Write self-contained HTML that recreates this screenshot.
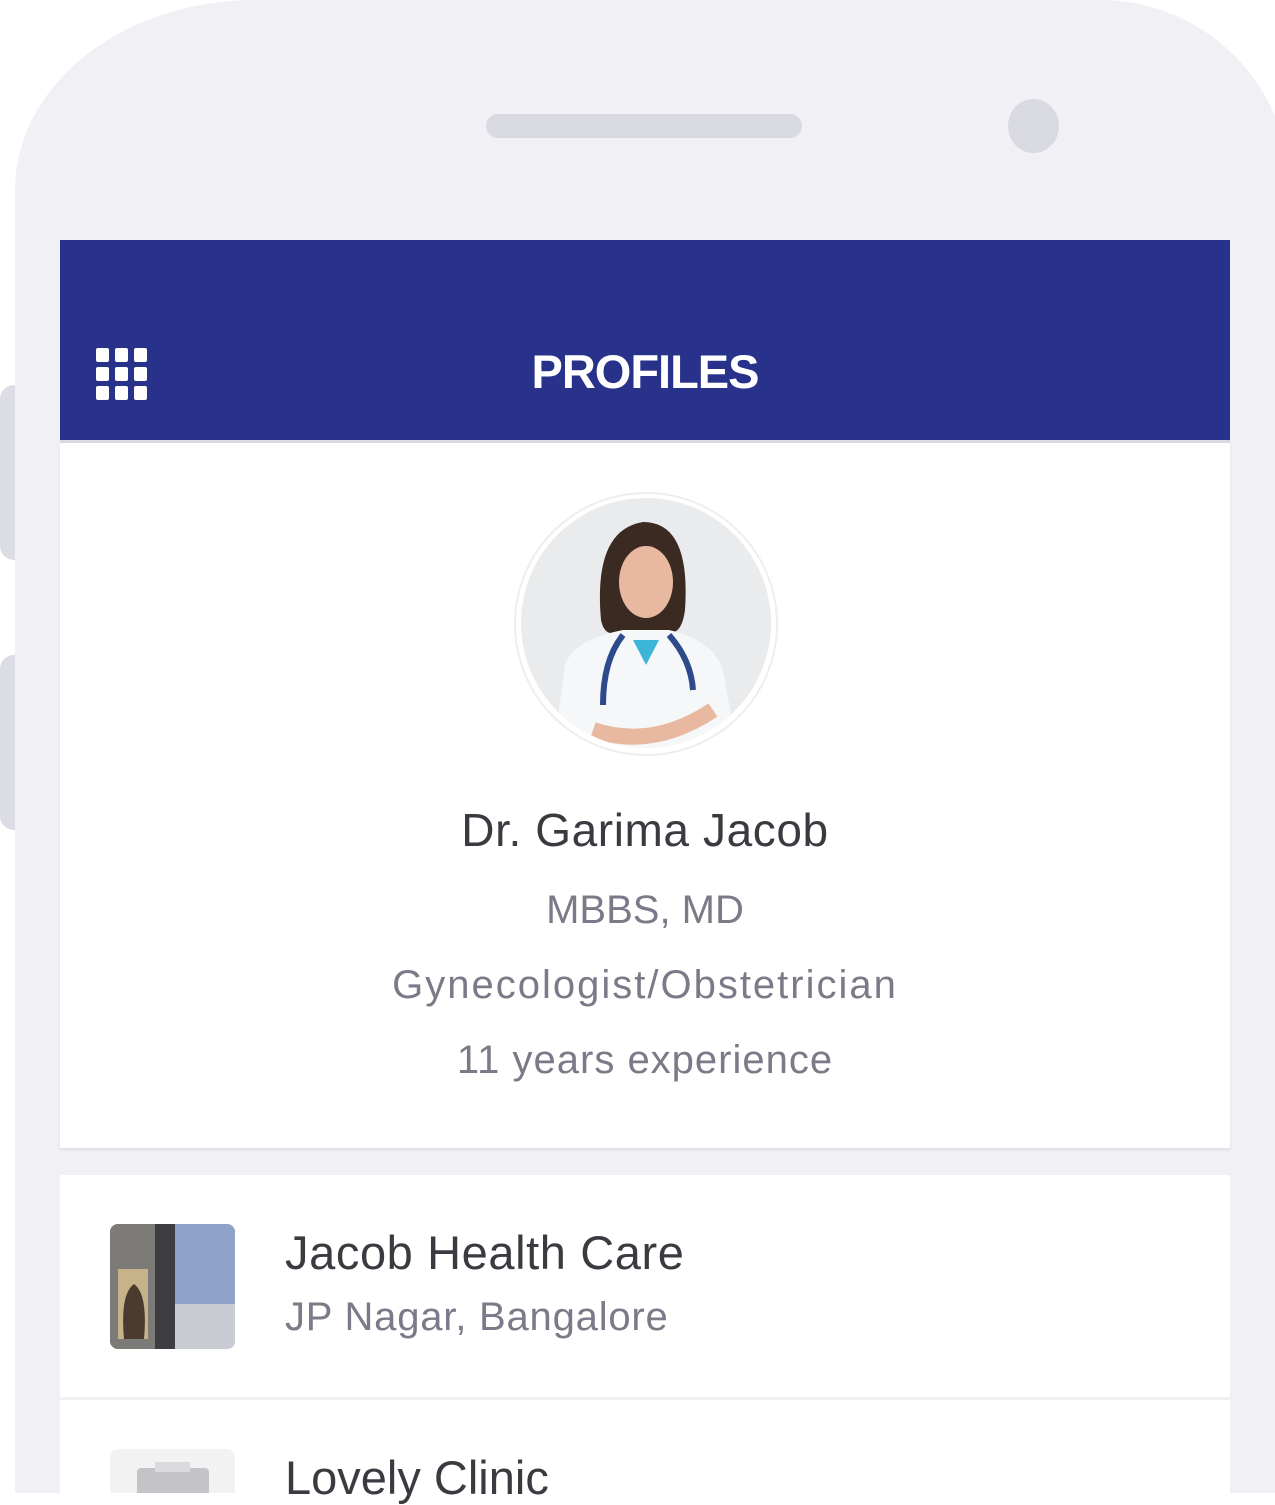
<!DOCTYPE html>
<html><head><meta charset="utf-8"><style>
*{margin:0;padding:0;box-sizing:border-box}
body{width:1275px;height:1505px;background:#fff;position:relative;overflow:hidden;font-family:"Liberation Sans",sans-serif}
.phone{position:absolute;left:15px;top:0;width:1275px;height:1493px;background:#f0f0f5;border-radius:240px 190px 0 0/190px 190px 0 0}
.btn{position:absolute;left:0;width:20px;background:#dcdce4;border-radius:14px 0 0 14px}
.spk{position:absolute;left:486px;top:114px;width:316px;height:24px;border-radius:12px;background:#d9d9e2}
.cam{position:absolute;left:1008px;top:99px;width:51px;height:54px;border-radius:50%;background:#d9d9e2}
.hdr{position:absolute;left:60px;top:240px;width:1170px;height:203px;background:#29328b;border-bottom:3px solid #d9d9e2}
.card{position:absolute;left:60px;top:443px;width:1170px;height:705px;background:#fff;box-shadow:0 2px 3px rgba(0,0,0,.08)}
.c{position:absolute;left:0;width:1170px;text-align:center;color:#7a7a88;font-size:40px}
.row{position:absolute;left:60px;width:1170px;background:#fff}
.t1{position:absolute;left:225px;font-size:47px;color:#3a3a40}
.t2{position:absolute;left:225px;font-size:40px;color:#7a7a88}
</style></head><body>
<div class="btn" style="top:385px;height:175px"></div>
<div class="btn" style="top:655px;height:175px"></div>
<div class="phone"></div>
<div class="spk"></div><div class="cam"></div>
<div class="hdr">
<svg style="position:absolute;left:36px;top:108px" width="52" height="52"><g fill="#fff">
<rect x="0" y="0" width="13" height="14" rx="2"/><rect x="19" y="0" width="13" height="14" rx="2"/><rect x="38" y="0" width="13" height="14" rx="2"/>
<rect x="0" y="19" width="13" height="14" rx="2"/><rect x="19" y="19" width="13" height="14" rx="2"/><rect x="38" y="19" width="13" height="14" rx="2"/>
<rect x="0" y="38" width="13" height="14" rx="2"/><rect x="19" y="38" width="13" height="14" rx="2"/><rect x="38" y="38" width="13" height="14" rx="2"/></g></svg>
<div style="position:absolute;left:0;right:0;top:104px;text-align:center;color:#fff;font-size:47px;font-weight:bold;letter-spacing:-1px">PROFILES</div>
</div>
<div class="card">
<svg style="position:absolute;left:453px;top:47px" width="266" height="266">
<defs><clipPath id="cp"><circle cx="133" cy="133" r="125"/></clipPath></defs>
<circle cx="133" cy="134" r="131" fill="#fff" stroke="#eee" stroke-width="2"/>
<g clip-path="url(#cp)">
<rect width="266" height="266" fill="#e9ebec"/>
<path d="M88 130 Q80 40 130 32 Q178 32 172 120 Q168 150 150 140 L110 140 Q92 150 88 130Z" fill="#3b2a22"/>
<ellipse cx="133" cy="92" rx="27" ry="36" fill="#e8b9a0"/>
<path d="M40 266 L52 175 Q60 150 110 140 L156 140 Q200 150 210 180 L225 266Z" fill="#f6f7f9"/>
<path d="M120 150 L133 175 L146 150Z" fill="#3cb5d8"/>
<path d="M110 145 Q90 170 90 215" stroke="#2d4a8a" stroke-width="6" fill="none"/>
<path d="M156 145 Q178 170 180 200" stroke="#2d4a8a" stroke-width="6" fill="none"/>
<path d="M80 240 Q140 260 200 220" stroke="#e8b9a0" stroke-width="16" fill="none"/>
</g></svg>
<div class="c" style="top:360px;color:#3a3a40;font-size:46px;letter-spacing:0.6px">Dr. Garima Jacob</div>
<div class="c" style="top:445px">MBBS, MD</div>
<div class="c" style="top:520px;letter-spacing:2px">Gynecologist/Obstetrician</div>
<div class="c" style="top:595px;letter-spacing:1px">11 years experience</div>
</div>
<div class="row" style="top:1175px;height:222px">
<svg style="position:absolute;left:50px;top:49px" width="125" height="125"><defs><clipPath id="r"><rect width="125" height="125" rx="8"/></clipPath></defs><g clip-path="url(#r)">
<rect width="125" height="125" fill="#9a9ca2"/><rect x="0" y="0" width="45" height="125" fill="#7d7b78"/><rect x="45" y="0" width="20" height="125" fill="#3e3e42"/><rect x="65" y="0" width="60" height="80" fill="#8fa3c8"/><rect x="65" y="80" width="60" height="45" fill="#c9ccd2"/><rect x="8" y="45" width="30" height="70" fill="#c7b38a"/><path d="M14 115 Q10 70 24 60 Q38 70 34 115Z" fill="#4a3b2e"/></g></svg>
<div class="t1" style="top:50px;letter-spacing:0.6px">Jacob Health Care</div>
<div class="t2" style="top:120px;letter-spacing:0.8px">JP Nagar, Bangalore</div>
</div>
<div style="position:absolute;left:60px;top:1397px;width:1170px;height:3px;background:#f0f0f5"></div>
<div class="row" style="top:1400px;height:93px">
<div style="position:absolute;left:50px;top:49px;width:125px;height:44px;background:#f2f2f3;border-radius:8px 8px 0 0"></div>
<div style="position:absolute;left:77px;top:68px;width:72px;height:25px;background:#c4c4c8;border-radius:4px 4px 0 0"></div>
<div style="position:absolute;left:95px;top:62px;width:35px;height:10px;background:#dadade"></div>
<div class="t1" style="top:50px">Lovely Clinic</div>
</div>
</body></html>
